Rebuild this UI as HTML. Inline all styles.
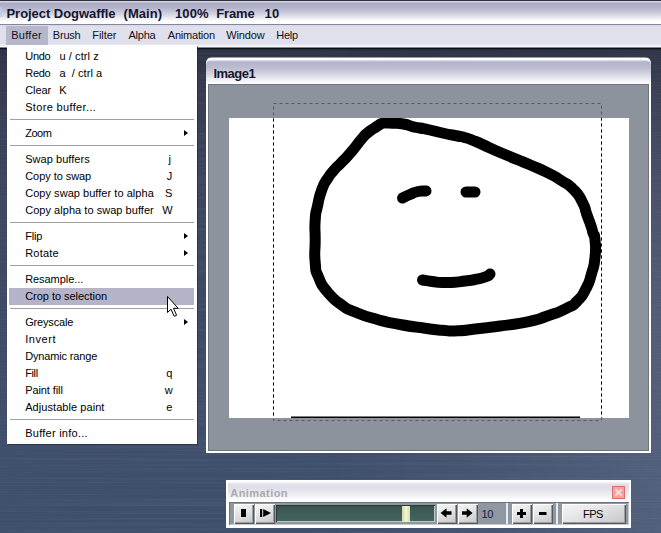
<!DOCTYPE html>
<html><head><meta charset="utf-8"><title>Project Dogwaffle</title>
<style>
html,body{margin:0;padding:0}
body{width:661px;height:533px;overflow:hidden;position:relative;font-family:'Liberation Sans',sans-serif;
 background:linear-gradient(180deg,#2d3145 48px,#33374c 75px,#383d54 110px,#3c4560 200px,#3e4a66 350px,#3e4f6c 470px,#3d4e6b 533px)}
.a{position:absolute}
.t{position:absolute;white-space:pre;line-height:normal}
#tex{left:0;top:48px;width:661px;height:485px;opacity:.5;
 background:repeating-linear-gradient(180deg,rgba(255,255,255,.03) 0px,rgba(0,0,0,.04) 2px,rgba(255,255,255,.02) 5px,rgba(0,0,0,.03) 7px)}
#rlite{left:330px;top:48px;width:331px;height:485px;background:linear-gradient(90deg,rgba(125,125,140,0) 0,rgba(125,125,140,.12) 40%,rgba(132,136,158,.30) 100%);-webkit-mask-image:linear-gradient(180deg,rgba(0,0,0,.1) 0,rgba(0,0,0,.5) 25%,#000 50%,#000 100%);mask-image:linear-gradient(180deg,rgba(0,0,0,.1) 0,rgba(0,0,0,.5) 25%,#000 50%,#000 100%)}
#title{left:0;top:0;width:661px;height:25px;background:linear-gradient(180deg,#2e2e40 0px,#2e2e40 1px,#d4d4e2 1px,#d4d4e2 2px,#a9a9c3 3px,#b4b4cc 8px,#d2d2e1 14px,#f2f2f6 19px,#ffffff 21px,#ffffff 24px,#84849a 24px,#84849a 25px)}
#mbar{left:0;top:25px;width:661px;height:22px;background:linear-gradient(180deg,#d6d6e4 0px,#dfe0ec 2px,#dfe0ec 19px,#eeeef4 20px,#f4f4f8 21px,#f4f4f8 22px)}
#mbdark{left:0;top:47px;width:661px;height:3px;background:linear-gradient(180deg,#85858f 0,#85858f 1px,#0e0e16 1px,#0e0e16 2px,#262a3a 2px,#262a3a 3px)}
#mhl{left:6px;top:26px;width:42px;height:19px;background:#b7b7cb}
#menu{left:7px;top:45px;width:190px;height:399px;background:#fff;box-shadow:1px 1px 0 rgba(30,34,50,.55)}
#win{left:206px;top:57px;width:445px;height:396px;background:linear-gradient(180deg,rgba(255,255,255,.5) 0,rgba(255,255,255,.5) 1px,#fff 1px);border-radius:6px 6px 0 0}
#wtitle{left:206px;top:60px;width:445px;height:24px;border-radius:5px 5px 0 0;background:linear-gradient(180deg,#e6e6f0 0,#b3b3cb 2px,#bcbcd1 8px,#d8d8e5 15px,#f4f4f8 21px,#ffffff 24px)}
#wclient{left:208px;top:84px;width:441px;height:367px;background:#8c939c;box-shadow:inset 0 0 0 1px #6f757e}
#canvas{left:229px;top:118px;width:400px;height:300px;background:#fff}
#anim{left:226px;top:480px;width:405px;height:48px;background:#fff}
#atitle{left:228px;top:482px;width:401px;height:20px;background:linear-gradient(180deg,#f4f4f8 0,#dedee8 3px,#e2e2ea 8px,#f2f2f6 14px,#ffffff 19px)}
#arow{left:229px;top:502px;width:400px;height:23px;background:#8f97a3;box-shadow:inset 1px 1px 0 #6d747f, inset -1px -1px 0 #c4c8cf}
.btn{position:absolute;top:504px;height:20px;background:linear-gradient(160deg,#f6f6f6 0,#e6e6e8 40%,#c4c4c8 100%);box-shadow:inset 1px 1px 0 #fff, inset -1px -1px 0 #55585f, inset -2px -2px 0 #9a9ca2}
#track{left:276px;top:505px;width:159px;height:17px;background:linear-gradient(180deg,#35504c 0,#3e5c57 40%,#44645e 100%);box-shadow:inset 1px 1px 0 #27393a, inset -1px -1px 0 #b9c9c6}
#thumb{left:402px;top:506px;width:8px;height:16px;background:linear-gradient(90deg,#d2d6a8 0,#f3f5d4 50%,#d8dcb0 100%)}
#close{left:612px;top:486px;width:13px;height:13px;background:#f2a3a3;box-shadow:inset 0 0 0 1px #e16a6a}
</style></head><body>
<svg class="a" style="left:0;top:48px" width="661" height="485"><filter id="nz" x="0" y="0" width="100%" height="100%"><feTurbulence type="fractalNoise" baseFrequency="0.003 0.7" numOctaves="2" seed="7"/><feColorMatrix type="matrix" values="0 0 0 0 0.5  0 0 0 0 0.55  0 0 0 0 0.7  0.7 0 0 0 -0.28"/></filter><rect width="661" height="485" filter="url(#nz)" opacity=".28"/></svg>
<div class="a" id="rlite"></div>
<div class="a" id="title"></div>
<div class="a" style="left:0;top:7px;width:2px;height:10px;background:linear-gradient(90deg,#b4cdea,#c8d4e6);opacity:.8"></div>
<div class="a" id="mbar"></div>
<div class="a" id="mbdark"></div>
<div class="a" id="mhl"></div>

<div class="a" id="win"></div>
<div class="a" id="wtitle"></div>
<div class="a" id="wclient"></div>
<div class="a" id="canvas"></div>
<svg class="a" style="left:208px;top:85px" width="441" height="366" viewBox="208 85 441 366">
 <defs><clipPath id="cv"><rect x="229" y="118" width="400" height="300"/></clipPath></defs>
 <g clip-path="url(#cv)" fill="none" stroke="#000" stroke-width="11" stroke-linecap="round" stroke-linejoin="round">
  <path d="M382.5,123.3 C385.2,122.6 383.7,123.0 387.0,123.0 C390.3,123.0 386.9,122.9 392.4,123.2 C397.9,123.5 396.5,122.8 403.4,124.0 C410.3,125.2 407.7,125.5 413.2,126.8 C418.7,128.1 414.4,126.9 420.0,128.0 C425.6,129.1 422.5,128.3 430.0,130.0 C437.5,131.7 433.3,131.0 442.5,133.0 C451.7,135.0 450.4,134.6 457.5,136.0 C464.6,137.4 457.9,135.5 463.7,137.2 C469.5,138.9 466.2,137.6 475.0,141.2 C483.8,144.8 479.2,143.2 490.0,148.0 C500.8,152.8 494.6,150.1 507.5,155.5 C520.4,160.9 515.4,158.5 528.7,164.2 C542.0,169.9 536.7,167.3 547.5,172.7 C558.3,178.1 552.5,174.9 561.2,180.5 C569.9,186.1 566.5,182.3 573.5,189.5 C580.5,196.7 577.8,193.5 582.3,202.0 C586.8,210.5 584.0,206.8 587.0,215.0 C590.0,223.2 589.2,220.5 591.2,226.5 C593.2,232.5 591.7,228.5 593.0,233.0 C594.3,237.5 594.3,231.8 595.0,240.0 C595.7,248.2 596.2,246.3 595.0,257.5 C593.8,268.7 594.5,263.3 591.5,273.7 C588.5,284.1 590.7,279.5 586.0,288.6 C581.3,297.7 584.0,294.3 577.3,301.0 C570.6,307.7 576.0,303.6 566.0,308.6 C556.0,313.6 559.8,311.7 547.3,316.0 C534.8,320.3 544.4,318.3 528.6,321.6 C512.8,324.9 517.9,323.5 500.0,326.0 C482.1,328.5 489.0,327.4 475.0,329.0 C461.0,330.6 469.0,330.4 458.0,330.8 C447.0,331.2 453.0,331.2 442.0,330.3 C431.0,329.4 439.0,330.1 425.0,328.2 C411.0,326.3 415.8,327.4 400.0,324.5 C384.2,321.6 392.5,323.7 377.5,319.5 C362.5,315.3 367.1,317.0 355.0,312.0 C342.9,307.0 350.4,311.2 341.2,304.5 C332.0,297.8 335.0,301.0 327.5,292.0 C320.0,283.0 322.8,287.3 318.7,277.5 C314.6,267.7 316.4,275.0 315.2,262.5 C314.0,250.0 315.2,254.2 315.2,240.0 C315.2,225.8 314.4,231.3 315.2,220.0 C316.0,208.7 315.3,216.0 317.5,206.0 C319.7,196.0 318.4,199.1 321.7,190.0 C325.0,180.9 323.5,185.2 327.5,178.7 C331.5,172.2 329.4,175.6 333.7,170.5 C338.0,165.4 335.9,168.3 340.5,163.5 C345.1,158.7 342.6,161.7 347.6,156.1 C352.6,150.5 350.8,152.5 355.6,146.6 C360.4,140.7 357.9,143.2 362.0,138.5 C366.1,133.8 364.0,135.9 368.0,132.5 C372.0,129.1 370.4,130.8 374.1,128.3 C377.8,125.8 376.2,126.7 379.0,125.0 C381.8,123.3 379.8,124.0 382.5,123.3 Z"/>
  <path d="M402.5,198.0 C405.0,196.8 404.8,196.7 410.0,194.5 C415.2,192.3 412.7,192.7 418.0,191.5 C423.3,190.3 423.3,191.2 426.0,191.0"/>
  <path d="M466.0,192.0 C469.0,192.0 472.0,192.0 475.0,192.0"/>
  <path d="M422.5,280.0 C425.7,280.5 425.3,280.7 432.0,281.5 C438.7,282.3 434.8,282.3 442.5,282.5 C450.2,282.7 447.5,282.7 455.0,282.2 C462.5,281.7 458.3,281.9 465.0,281.0 C471.7,280.1 468.0,280.9 475.0,279.5 C482.0,278.1 481.0,278.5 486.0,276.7 C491.0,274.9 488.7,274.9 490.0,274.0"/>
  <path d="M291,417.3 L580,417.3" stroke-width="1.4" stroke-linecap="butt"/>
 </g>
 <rect x="273.5" y="103.5" width="328" height="317" fill="none" stroke="#545961" stroke-width="1" stroke-dasharray="3 3"/>
 <g clip-path="url(#cv)"><rect x="273.5" y="103.5" width="328" height="317" fill="none" stroke="#000" stroke-width="1" stroke-dasharray="3 3"/></g>
</svg>

<div class="a" id="menu"></div>
<div style="position:absolute;left:10px;top:119px;width:184px;height:1px;background:#a0a0a0"></div>
<div style="position:absolute;left:184px;top:130px;width:0;height:0;border-left:4px solid #000;border-top:3.5px solid transparent;border-bottom:3.5px solid transparent"></div>
<div style="position:absolute;left:10px;top:145px;width:184px;height:1px;background:#a0a0a0"></div>
<div style="position:absolute;left:10px;top:222px;width:184px;height:1px;background:#a0a0a0"></div>
<div style="position:absolute;left:184px;top:233px;width:0;height:0;border-left:4px solid #000;border-top:3.5px solid transparent;border-bottom:3.5px solid transparent"></div>
<div style="position:absolute;left:184px;top:250px;width:0;height:0;border-left:4px solid #000;border-top:3.5px solid transparent;border-bottom:3.5px solid transparent"></div>
<div style="position:absolute;left:10px;top:265px;width:184px;height:1px;background:#a0a0a0"></div>
<div style="position:absolute;left:9px;top:288px;width:185px;height:17px;background:#b5b3c8"></div>
<div style="position:absolute;left:10px;top:308px;width:184px;height:1px;background:#a0a0a0"></div>
<div style="position:absolute;left:184px;top:319px;width:0;height:0;border-left:4px solid #000;border-top:3.5px solid transparent;border-bottom:3.5px solid transparent"></div>
<div style="position:absolute;left:10px;top:419px;width:184px;height:1px;background:#a0a0a0"></div>

<div class="a" id="anim"></div>
<div class="a" id="atitle"></div>
<div class="a" id="arow"></div>
<div class="a" id="close"></div>
<svg class="a" style="left:612px;top:486px" width="13" height="13" viewBox="0 0 13 13"><path d="M3.5,3.5 L9.5,9.5 M9.5,3.5 L3.5,9.5" stroke="#fbdcdc" stroke-width="2" fill="none"/></svg>
<div class="btn" style="left:234px;width:20px"></div>
<div class="btn" style="left:255px;width:20px"></div>
<div class="a" id="track"></div>
<div class="a" id="thumb"></div>
<div class="btn" style="left:437px;width:20px"></div>
<div class="btn" style="left:458px;width:20px"></div>
<div class="a" style="left:506px;top:503px;width:2px;height:21px;background:#e8eaee"></div>
<div class="btn" style="left:512px;width:20px"></div>
<div class="btn" style="left:533px;width:20px"></div>
<div class="a" style="left:556px;top:503px;width:2px;height:21px;background:#e8eaee"></div>
<div class="btn" style="left:562px;width:64px"></div>
<svg class="a" style="left:229px;top:502px" width="400" height="23" viewBox="229 502 400 23" fill="#000">
 <rect x="241" y="509" width="5" height="8"/>
 <rect x="260" y="509" width="2.2" height="8"/><path d="M263.2,509 L271,513 L263.2,517 Z"/>
 <path d="M440.6,513 L446.5,508.3 L446.5,511.2 L451.5,511.2 L451.5,514.8 L446.5,514.8 L446.5,517.7 Z"/>
 <path d="M472.6,513 L466.7,508.3 L466.7,511.2 L462,511.2 L462,514.8 L466.7,514.8 L466.7,517.7 Z"/>
 <path d="M520,509 h3 v3 h3 v3 h-3 v3 h-3 v-3 h-3 v-3 h3 Z"/>
 <rect x="539" y="512" width="7.5" height="3"/>
</svg>

<span class="t" style="left:6.50px;top:6.23px;font-size:13px;font-weight:700;color:#14142e;letter-spacing:-0.047px">Project Dogwaffle</span>
<span class="t" style="left:123.50px;top:6.23px;font-size:13px;font-weight:700;color:#14142e;letter-spacing:0.070px">(Main)</span>
<span class="t" style="left:175.00px;top:6.23px;font-size:13px;font-weight:700;color:#14142e;letter-spacing:0.138px">100%</span>
<span class="t" style="left:216.20px;top:6.23px;font-size:13px;font-weight:700;color:#14142e;letter-spacing:-0.146px">Frame</span>
<span class="t" style="left:264.50px;top:6.23px;font-size:13px;font-weight:700;color:#14142e;letter-spacing:0.266px">10</span>
<span class="t" style="left:11.20px;top:29.05px;font-size:11px;font-weight:400;color:#101020;letter-spacing:0.274px">Buffer</span>
<span class="t" style="left:52.80px;top:29.05px;font-size:11px;font-weight:400;color:#101020;letter-spacing:-0.210px">Brush</span>
<span class="t" style="left:92.20px;top:29.05px;font-size:11px;font-weight:400;color:#101020;letter-spacing:-0.026px">Filter</span>
<span class="t" style="left:128.50px;top:29.05px;font-size:11px;font-weight:400;color:#101020;letter-spacing:-0.228px">Alpha</span>
<span class="t" style="left:167.80px;top:29.05px;font-size:11px;font-weight:400;color:#101020;letter-spacing:-0.214px">Animation</span>
<span class="t" style="left:226.20px;top:29.05px;font-size:11px;font-weight:400;color:#101020;letter-spacing:-0.137px">Window</span>
<span class="t" style="left:276.20px;top:29.05px;font-size:11px;font-weight:400;color:#101020;letter-spacing:-0.256px">Help</span>
<span class="t" style="left:25.20px;top:50.05px;font-size:11px;font-weight:400;color:#000;letter-spacing:-0.249px">Undo</span>
<span class="t" style="left:59.50px;top:50.05px;font-size:11px;font-weight:400;color:#000;letter-spacing:0.078px">u / ctrl z</span>
<span class="t" style="left:25.20px;top:67.05px;font-size:11px;font-weight:400;color:#000;letter-spacing:-0.249px">Redo</span>
<span class="t" style="left:59.50px;top:67.05px;font-size:11px;font-weight:400;color:#000;letter-spacing:0.047px">a&nbsp;&nbsp;/&nbsp;ctrl&nbsp;a</span>
<span class="t" style="left:25.20px;top:84.05px;font-size:11px;font-weight:400;color:#000;letter-spacing:-0.059px">Clear</span>
<span class="t" style="left:59.33px;top:84.05px;font-size:11px;font-weight:400;color:#000;letter-spacing:0.000px">K</span>
<span class="t" style="left:25.20px;top:101.05px;font-size:11px;font-weight:400;color:#000;letter-spacing:0.344px">Store buffer...</span>
<span class="t" style="left:25.20px;top:127.05px;font-size:11px;font-weight:400;color:#000;letter-spacing:-0.456px">Zoom</span>
<span class="t" style="left:25.20px;top:153.04px;font-size:11px;font-weight:400;color:#000;letter-spacing:0.049px">Swap buffers</span>
<span class="t" style="left:168.42px;top:153.04px;font-size:11px;font-weight:400;color:#000;letter-spacing:0.000px">j</span>
<span class="t" style="left:25.20px;top:170.04px;font-size:11px;font-weight:400;color:#000;letter-spacing:-0.055px">Copy to swap</span>
<span class="t" style="left:166.75px;top:170.04px;font-size:11px;font-weight:400;color:#000;letter-spacing:0.000px">J</span>
<span class="t" style="left:25.20px;top:187.04px;font-size:11px;font-weight:400;color:#000;letter-spacing:0.040px">Copy swap buffer to alpha</span>
<span class="t" style="left:164.93px;top:187.04px;font-size:11px;font-weight:400;color:#000;letter-spacing:0.000px">S</span>
<span class="t" style="left:25.20px;top:204.04px;font-size:11px;font-weight:400;color:#000;letter-spacing:0.040px">Copy alpha to swap buffer</span>
<span class="t" style="left:162.30px;top:204.04px;font-size:11px;font-weight:400;color:#000;letter-spacing:0.000px">W</span>
<span class="t" style="left:25.20px;top:230.04px;font-size:11px;font-weight:400;color:#000;letter-spacing:-0.184px">Flip</span>
<span class="t" style="left:25.20px;top:247.04px;font-size:11px;font-weight:400;color:#000;letter-spacing:0.196px">Rotate</span>
<span class="t" style="left:25.20px;top:273.05px;font-size:11px;font-weight:400;color:#000;letter-spacing:-0.064px">Resample...</span>
<span class="t" style="left:25.20px;top:290.05px;font-size:11px;font-weight:400;color:#000;letter-spacing:-0.032px">Crop to selection</span>
<span class="t" style="left:25.20px;top:316.05px;font-size:11px;font-weight:400;color:#000;letter-spacing:-0.170px">Greyscale</span>
<span class="t" style="left:25.20px;top:333.05px;font-size:11px;font-weight:400;color:#000;letter-spacing:0.581px">Invert</span>
<span class="t" style="left:25.20px;top:350.05px;font-size:11px;font-weight:400;color:#000;letter-spacing:-0.153px">Dynamic range</span>
<span class="t" style="left:25.20px;top:367.05px;font-size:11px;font-weight:400;color:#000;letter-spacing:-0.366px">Fill</span>
<span class="t" style="left:166.29px;top:367.05px;font-size:11px;font-weight:400;color:#000;letter-spacing:0.000px">q</span>
<span class="t" style="left:25.20px;top:384.05px;font-size:11px;font-weight:400;color:#000;letter-spacing:-0.093px">Paint fill</span>
<span class="t" style="left:164.87px;top:384.05px;font-size:11px;font-weight:400;color:#000;letter-spacing:0.000px">w</span>
<span class="t" style="left:25.20px;top:401.05px;font-size:11px;font-weight:400;color:#000;letter-spacing:0.064px">Adjustable paint</span>
<span class="t" style="left:166.29px;top:401.05px;font-size:11px;font-weight:400;color:#000;letter-spacing:0.000px">e</span>
<span class="t" style="left:25.20px;top:427.05px;font-size:11px;font-weight:400;color:#000;letter-spacing:0.249px">Buffer info...</span>
<span class="t" style="left:213.40px;top:66.23px;font-size:13px;font-weight:700;color:#14142e;letter-spacing:-0.485px">Image1</span>
<span class="t" style="left:230.30px;top:486.55px;font-size:11px;font-weight:700;color:#a9a9ad;letter-spacing:0.435px">Animation</span>
<span class="t" style="left:481.50px;top:508.05px;font-size:11px;font-weight:400;color:#1c2032;letter-spacing:-0.375px">10</span>
<span class="t" style="left:583.00px;top:508.05px;font-size:11px;font-weight:400;color:#000;letter-spacing:-0.535px">FPS</span>

<svg class="a" style="left:167px;top:296px" width="13" height="22" viewBox="0 0 13 22"><path d="M0.5,0.5 L0.5,16.5 L4,13.2 L7.2,20.3 L9.6,19.3 L6.5,12.3 L11.2,12.3 Z" fill="#fff" stroke="#000" stroke-width="1" stroke-linejoin="miter"/></svg>
</body></html>
